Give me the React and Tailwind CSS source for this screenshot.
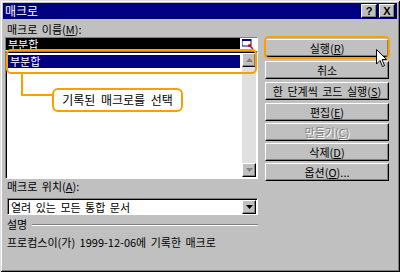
import React from 'react';

const font = { fontFamily: '"Noto Sans CJK KR", "Liberation Sans", sans-serif' };

const Btn = ({ children, disabled, className = '' }) => (
  <div
    className={`h-[18px] w-[124px] flex items-center justify-center text-[11px] leading-[12px] [word-spacing:2px] bg-[#c0c0c0] border border-t-white border-l-white border-r-black border-b-black shadow-[inset_-1px_-1px_0_#808080] ${
      disabled ? 'text-[#808080] [text-shadow:1px_1px_0_#fff]' : 'text-black'
    } ${className}`}
  >
    {children}
  </div>
);

const U = ({ children }) => <span className="underline underline-offset-1">{children}</span>;

const Arrow = ({ up, dark }) => (
  <svg width="7" height="4" viewBox="0 0 7 4">
    {up ? (
      <path d="M3.5 0 L7 4 L0 4 Z" fill={dark ? '#000' : '#808080'} />
    ) : (
      <path d="M0 0 L7 0 L3.5 4 Z" fill={dark ? '#000' : '#808080'} />
    )}
  </svg>
);

const ScrollBtn = ({ up, dark }) => (
  <div className="h-[14px] w-[14px] flex items-center justify-center bg-[#c0c0c0] border border-t-white border-l-white border-r-black border-b-black shadow-[inset_-1px_-1px_0_#808080]">
    <Arrow up={up} dark={dark} />
  </div>
);

export default function App() {
  return (
    <div
      className="relative w-[400px] h-[272px] bg-[#c0c0c0] p-[3px] shadow-[inset_1px_1px_0_#dfdfdf,inset_-1px_-1px_0_#000,inset_2px_2px_0_#fff,inset_-2px_-2px_0_#808080] overflow-hidden"
      style={font}
    >
      {/* title bar */}
      <div className="h-[16px] bg-[#000080] flex items-center justify-between pl-[2px] pr-[2px]">
        <span className="text-white text-[12px] leading-[14px]">매크로</span>
        <div className="flex gap-[2px]">
          <div className="w-[16px] h-[14px] flex items-center justify-center bg-[#c0c0c0] border border-t-white border-l-white border-r-black border-b-black shadow-[inset_-1px_-1px_0_#808080] text-[11px] font-bold leading-none text-black" style={{ fontFamily: '"Liberation Sans", sans-serif' }}>
            ?
          </div>
          <div className="w-[16px] h-[14px] flex items-center justify-center bg-[#c0c0c0] border border-t-white border-l-white border-r-black border-b-black shadow-[inset_-1px_-1px_0_#808080] text-[11px] font-bold leading-none text-black" style={{ fontFamily: '"Liberation Sans", sans-serif' }}>
            X
          </div>
        </div>
      </div>

      <div className="flex pl-[2px] gap-[7px]">
        {/* left column */}
        <div className="w-[253px] flex flex-col">
          <div className="mt-[4px] h-[12px] leading-[12px] text-[11px] pl-[2px] text-black [word-spacing:2px]">
            매크로 이름(<U>M</U>):
          </div>
          <div className="mt-[2px] h-[14px] bg-white border border-t-[#808080] border-l-[#808080] border-r-white border-b-white flex items-center pr-[3px]">
            <div className="flex-1 h-[12px] bg-black text-white text-[11px] leading-[12px] pl-[2px]">부분합</div>
            <svg width="12" height="10" viewBox="0 0 12 10" className="ml-[2px]">
              <rect x="0" y="0" width="9" height="7" fill="#fff" stroke="#000080" />
              <rect x="0" y="0" width="9" height="2" fill="#000080" />
              <path d="M7 6 L11 10 M9 6 L7 6 L7 8" stroke="#e00000" strokeWidth="1.5" fill="none" />
            </svg>
          </div>
          <div className="h-[128px] bg-white border border-t-[#808080] border-l-[#808080] border-r-white border-b-white shadow-[inset_1px_1px_0_#000] flex pl-[2px] pt-[2px] pr-[1px] pb-[1px]">
            <div className="flex-1 pt-[1px]">
              <div className="h-[13px] bg-[#000080] text-white text-[11px] leading-[13px] pl-[2px] mr-[2px]">부분합</div>
            </div>
            <div className="w-[14px] flex flex-col -mt-[1px]">
              <ScrollBtn up />
              <div className="flex-1 bg-[#e0e0e0]" />
              <ScrollBtn />
            </div>
          </div>
          <div className="mt-[1px] h-[12px] leading-[12px] text-[11px] pl-[2px] text-black [word-spacing:2px]">
            매크로 위치(<U>A</U>):
          </div>
          <div className="mt-[6px] ml-[2px] h-[17px] bg-white border border-t-[#808080] border-l-[#808080] border-r-white border-b-white shadow-[inset_1px_1px_0_#000] flex items-center pl-[3px] pr-[1px]">
            <span className="flex-1 text-[11px] leading-[12px] text-black [word-spacing:2px]">열려 있는 모든 통합 문서</span>
            <ScrollBtn dark />
          </div>
          <div className="mt-[3px] h-[12px] flex items-center gap-[5px] pl-[2px]">
            <span className="text-[11px] leading-[12px] text-black">설명</span>
            <div className="flex-1 h-[2px] border-t border-t-[#808080] border-b border-b-white mt-[2px]" />
          </div>
          <div className="mt-[6px] h-[12px] leading-[12px] text-[11px] pl-[2px] text-black whitespace-nowrap [word-spacing:2px]">
            프로컴스이(가) 1999-12-06에 기록한 매크로
          </div>
        </div>

        {/* right column */}
        <div className="flex flex-col pt-[20px]">
          <Btn>실행(<U>R</U>)</Btn>
          <Btn className="mt-[4px]">취소</Btn>
          <Btn className="mt-[3px]">한 단계씩 코드 실행(<U>S</U>)</Btn>
          <Btn className="mt-[3px]">편집(<U>E</U>)</Btn>
          <Btn className="mt-[2px]" disabled>만들기(<U>C</U>)</Btn>
          <Btn className="mt-[2px]">삭제(<U>D</U>)</Btn>
          <Btn className="mt-[2px]">옵션(<U>O</U>)...</Btn>
        </div>
      </div>

      {/* callout overlays */}
      <div className="absolute left-[6px] top-[49px] w-[251px] h-[25px] border-2 border-[#f7a000] rounded-[5px]" />
      <div className="absolute left-[264px] top-[36px] w-[126px] h-[23px] border-2 border-[#f7a000] rounded-[5px]" />
      <div className="absolute left-[21px] top-[74px] w-[32px] h-[22px] border-l-2 border-b-2 border-[#f7a000]" />
      <div className="absolute left-[52px] top-[88px] w-[131px] h-[24px] bg-white border-2 border-[#f7a000] rounded-[6px] flex items-center justify-center text-[12px] text-black [word-spacing:3px]">
        기록된 매크로를 선택
      </div>
      <svg className="absolute left-[376px] top-[49px]" width="12" height="19" viewBox="0 0 12 19">
        <path d="M0.5 0.5 L0.5 15 L4 11.5 L6.5 17.5 L8.5 16.5 L6 10.5 L10.5 10.5 Z" fill="#fff" stroke="#000" strokeWidth="1" />
      </svg>
    </div>
  );
}
